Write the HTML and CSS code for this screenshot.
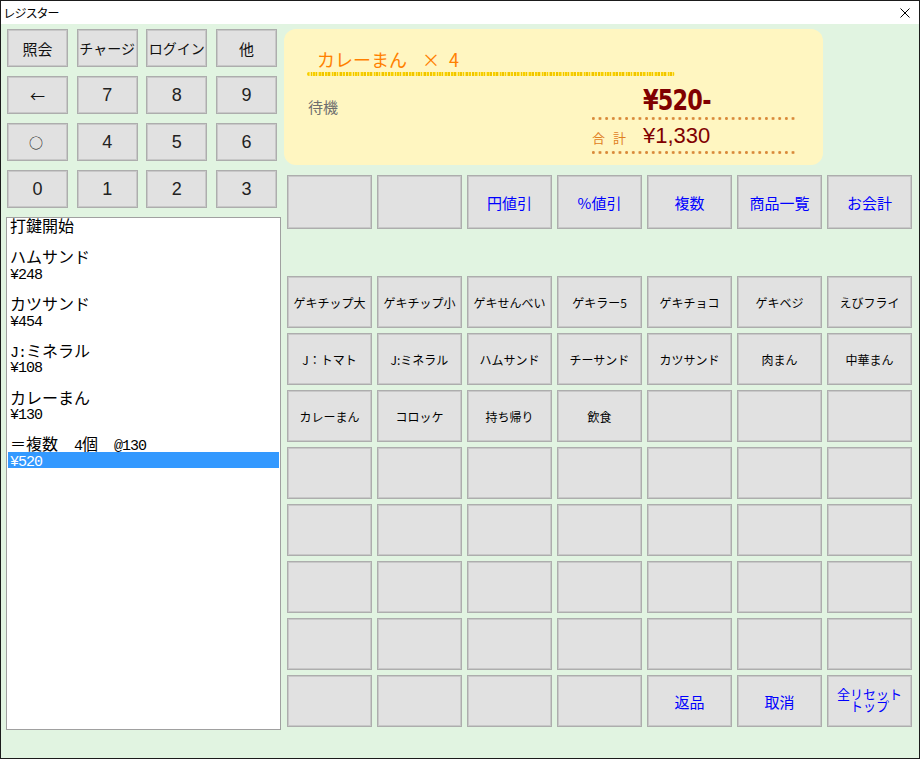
FILE: index.html
```html
<!DOCTYPE html>
<html lang="ja">
<head>
<meta charset="utf-8">
<title>レジスター</title>
<link rel="stylesheet" href="styles.css">
</head>
<body>
<div class="window">
  <div class="titlebar">
    <span class="title">レジスター</span>
    <svg class="close" width="10" height="10" viewBox="0 0 10 10"><path d="M0.5 0.5L9.5 9.5M9.5 0.5L0.5 9.5" stroke="#000" stroke-width="1" fill="none"/></svg>
  </div>
  <div class="client">
    <div class="left">
      <div class="keypad">
        <div class="key">照会</div>
        <div class="key tight">チャージ</div>
        <div class="key tight">ログイン</div>
        <div class="key">他</div>
        <div class="key">←</div>
        <div class="key num">7</div>
        <div class="key num">8</div>
        <div class="key num">9</div>
        <div class="key circle">○</div>
        <div class="key num">4</div>
        <div class="key num">5</div>
        <div class="key num">6</div>
        <div class="key num">0</div>
        <div class="key num">1</div>
        <div class="key num">2</div>
        <div class="key num">3</div>
      </div>
      <div class="journal">
        <div class="jl">打鍵開始</div>
        <div class="jl"></div>
        <div class="jl">ハムサンド</div>
        <div class="jl"><span class="hw">¥248</span></div>
        <div class="jl"></div>
        <div class="jl">カツサンド</div>
        <div class="jl"><span class="hw">¥454</span></div>
        <div class="jl"></div>
        <div class="jl"><span class="hw">J:</span>ミネラル</div>
        <div class="jl"><span class="hw">¥108</span></div>
        <div class="jl"></div>
        <div class="jl">カレーまん</div>
        <div class="jl"><span class="hw">¥130</span></div>
        <div class="jl"></div>
        <div class="jl">＝複数<span class="hw">  4</span>個<span class="hw">  @130</span></div>
        <div class="jl sel"><span class="hw">¥520</span></div>
      </div>
    </div>
    <div class="right">
      <div class="display">
        <div class="item-name">カレーまん<span class="times">×</span><span class="qty">4</span></div>
        <div class="squiggle"></div>
        <div class="lower">
          <div class="status">待機</div>
          <div class="totals">
            <div class="big"><span class="big-text">¥520-</span></div>
            <div class="dots"></div>
            <div class="sum"><span class="sum-label">合計</span><span class="sum-value">¥1,330</span></div>
            <div class="dots"></div>
          </div>
        </div>
      </div>
      <div class="func-row">
        <div class="btn"></div>
        <div class="btn"></div>
        <div class="btn blue">円値引</div>
        <div class="btn blue">%値引</div>
        <div class="btn blue">複数</div>
        <div class="btn blue">商品一覧</div>
        <div class="btn blue">お会計</div>
      </div>
      <div class="products">
        <div class="btn prod">ゲキチップ大</div>
        <div class="btn prod">ゲキチップ小</div>
        <div class="btn prod">ゲキせんべい</div>
        <div class="btn prod">ゲキラー5</div>
        <div class="btn prod">ゲキチョコ</div>
        <div class="btn prod">ゲキベジ</div>
        <div class="btn prod">えびフライ</div>

        <div class="btn prod">J：トマト</div>
        <div class="btn prod">J:ミネラル</div>
        <div class="btn prod">ハムサンド</div>
        <div class="btn prod">チーサンド</div>
        <div class="btn prod">カツサンド</div>
        <div class="btn prod">肉まん</div>
        <div class="btn prod">中華まん</div>

        <div class="btn prod">カレーまん</div>
        <div class="btn prod">コロッケ</div>
        <div class="btn prod">持ち帰り</div>
        <div class="btn prod">飲食</div>
        <div class="btn"></div>
        <div class="btn"></div>
        <div class="btn"></div>

        <div class="btn"></div><div class="btn"></div><div class="btn"></div><div class="btn"></div><div class="btn"></div><div class="btn"></div><div class="btn"></div>
        <div class="btn"></div><div class="btn"></div><div class="btn"></div><div class="btn"></div><div class="btn"></div><div class="btn"></div><div class="btn"></div>
        <div class="btn"></div><div class="btn"></div><div class="btn"></div><div class="btn"></div><div class="btn"></div><div class="btn"></div><div class="btn"></div>
        <div class="btn"></div><div class="btn"></div><div class="btn"></div><div class="btn"></div><div class="btn"></div><div class="btn"></div><div class="btn"></div>

        <div class="btn"></div>
        <div class="btn"></div>
        <div class="btn"></div>
        <div class="btn"></div>
        <div class="btn blue">返品</div>
        <div class="btn blue">取消</div>
        <div class="btn blue stack"><span class="stack-line">全リセット</span><span class="stack-line">トップ</span></div>
      </div>
    </div>
  </div>
</div>
</body>
</html>
```

FILE: styles.css
```css
html, body {
  margin: 0;
  padding: 0;
  background: #ffffff;
}

.window {
  width: 920px;
  height: 759px;
  box-sizing: border-box;
  border: 1px solid #1b1b1b;
  display: flex;
  flex-direction: column;
  font-family: "Noto Sans CJK JP", sans-serif;
  color: #000;
}

.titlebar {
  height: 23px;
  flex: none;
  background: #ffffff;
  display: flex;
  align-items: center;
  justify-content: space-between;
  padding: 0 9px 0 3px;
}

.title {
  font-size: 12px;
  font-feature-settings: "palt";
  line-height: 1;
}

.close {
  display: block;
}

.client {
  flex: 1;
  background: #e1f4e1;
  display: flex;
  padding: 5px 0 0 5px;
}

.left {
  width: 275px;
  display: flex;
  flex-direction: column;
}

.keypad {
  display: grid;
  grid-template-columns: repeat(4, 61px);
  grid-auto-rows: 38px;
  column-gap: 8.67px;
  row-gap: 9px;
  margin-left: 1px;
}

.key,
.btn {
  box-sizing: border-box;
  background: #e1e1e1;
  border: 1px solid #adadad;
  box-shadow: inset 0 0 0 1px #c8c8c8;
  display: flex;
  align-items: center;
  justify-content: center;
  text-align: center;
  white-space: nowrap;
}

.key {
  font-size: 15px;
  color: #111;
}

.key.tight {
  font-size: 14px;
}

.key.circle {
  font-size: 14px;
  padding-right: 3px;
}

.key.num {
  font-family: "Liberation Sans", sans-serif;
  font-size: 18px;
  color: #222;
}

.journal {
  margin-top: 9px;
  height: 513px;
  box-sizing: border-box;
  border: 1px solid #a0a0a0;
  background: #ffffff;
  padding: 0 1px;
  font-size: 16px;
  line-height: 15.6px;
}

.jl {
  height: 15.6px;
  padding-left: 2px;
  white-space: pre;
}

.jl .hw {
  font-family: "Liberation Mono", monospace;
  font-size: 15px;
  letter-spacing: -1px;
}

.jl.sel {
  background: #3399ff;
  color: #ffffff;
}

.right {
  margin-left: 3px;
  display: flex;
  flex-direction: column;
}

.display {
  width: 539px;
  height: 136px;
  box-sizing: border-box;
  background: #fff6c1;
  border-radius: 12px;
  padding: 19px 0 0 23px;
  display: flex;
  flex-direction: column;
}

.item-name {
  font-size: 18px;
  line-height: 22px;
  color: #ff8000;
  padding-left: 10px;
  white-space: pre;
}

.times {
  margin-left: 15px;
}

.qty {
  margin-left: 9px;
}

.squiggle {
  width: 368px;
  height: 4px;
  margin-top: 2px;
  background:
    repeating-linear-gradient(90deg, rgba(255,255,255,0.0) 0 3px, rgba(255,250,200,0.7) 3px 4px, rgba(255,255,255,0) 4px 7px),
    repeating-linear-gradient(90deg, #f7cf00 0 2px, #ffe34a 2px 3px, #f0c400 3px 5px, #ffe870 5px 6px);
  border-radius: 2px;
}

.lower {
  display: flex;
  margin-top: 10px;
}

.status {
  margin-top: 12.5px;
  margin-left: 1px;
  font-size: 15px;
  line-height: 15px;
  color: #6e6e6e;
}

.totals {
  margin-left: auto;
  margin-right: 25px;
  width: 206px;
}

.big {
  padding-left: 51px;
  height: 30px;
}

.big-text {
  display: inline-block;
  font-family: "DejaVu Sans", "Liberation Sans", sans-serif;
  font-weight: bold;
  font-size: 28px;
  line-height: 30px;
  color: #800000;
  transform: scaleX(0.8);
  transform-origin: left center;
  letter-spacing: -1px;
}

.dots {
  height: 3px;
  margin-top: 1px;
  background-image: radial-gradient(circle, #d98a3a 1.2px, rgba(217,138,58,0) 1.7px);
  background-size: 6.667px 3px;
  background-repeat: repeat-x;
  background-position: -2px 0;
}

.sum {
  display: flex;
  align-items: baseline;
  margin-top: 2px;
  line-height: 28px;
  height: 28px;
}

.sum-label {
  width: 51px;
  font-size: 13px;
  letter-spacing: 8px;
  color: #e0801e;
}

.sum-value {
  font-family: "Liberation Sans", sans-serif;
  font-size: 22px;
  color: #800000;
}

.func-row {
  margin: 10px 0 0 3px;
  display: grid;
  grid-template-columns: repeat(7, 85px);
  grid-template-rows: 54px;
  column-gap: 5px;
}

.products {
  margin: 47px 0 0 3px;
  display: grid;
  grid-template-columns: repeat(7, 85px);
  grid-template-rows: repeat(8, 52px);
  gap: 5px;
}

.btn.blue {
  color: #0000ff;
  font-size: 15px;
}

.btn.stack {
  flex-direction: column;
  font-size: 13px;
  padding-bottom: 2px;
}

.stack-line {
  display: block;
  height: 12.5px;
  line-height: 12.5px;
}

.btn.prod {
  font-size: 12px;
  color: #000;
}
```
